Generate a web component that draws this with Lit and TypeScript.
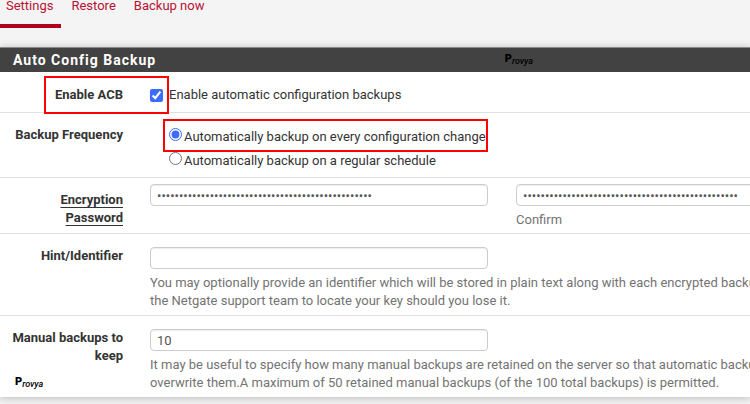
import { LitElement, html, css } from "lit";
import { customElement } from "lit/decorators.js";

@customElement("provya-mark")
class ProvyaMark extends LitElement {
  static styles = css`
    :host {
      display: flex;
      align-items: flex-end;
      color: #000;
      letter-spacing: normal;
    }
    .initial {
      font: 900 11px/12px Roboto, sans-serif;
    }
    .rest {
      font: italic 500 9px/8px Roboto, sans-serif;
    }
  `;
  render() {
    return html`<span class="initial">P</span><span class="rest">rovya</span>`;
  }
}

@customElement("app-root")
class AppRoot extends LitElement {
  static styles = css`
    :host {
      display: block;
      min-height: 100vh;
      overflow: hidden;
      background: #f4f4f4;
      color: #333;
      font: 400 13px/18px Roboto, sans-serif;
    }
    * {
      box-sizing: border-box;
    }
    .tabs {
      display: flex;
      gap: 4px;
      margin-bottom: 19px;
    }
    .tab {
      padding: 0 8px 0 6px;
      color: #b71234;
      text-decoration: none;
      border-bottom: 4px solid transparent;
      height: 28px;
      line-height: 12px;
    }
    .tab.active {
      border-bottom-color: #b0001e;
    }
    .panel {
      position: relative;
      background: #fff;
      box-shadow: 0 1px 8px rgba(0, 0, 0, 0.25);
    }
    .title {
      position: relative;
      margin: 0;
      padding: 0 13px;
      background: #424242;
      border-top: 1px solid #8a8a8a;
      color: #fff;
      font-size: 14px;
      font-weight: 700;
      line-height: 24px;
      letter-spacing: 1px;
    }
    .title-mark {
      position: absolute;
      left: 67.3%;
      top: 5px;
    }
    .foot-mark {
      position: absolute;
      left: 15px;
      bottom: 9px;
    }
    .row {
      position: relative;
      display: grid;
      grid-template-columns: 123px minmax(0, 1fr);
      column-gap: 27px;
      border-bottom: 1px solid #e0e0e0;
    }
    .row:last-of-type {
      border-bottom: 0;
    }
    .short {
      padding: 14px 0 8px;
    }
    .options {
      padding: 13px 0 7px;
    }
    .secret {
      padding: 6px 0 4px;
    }
    .tall {
      padding: 13px 0 5px;
    }
    .name {
      font-weight: 700;
      text-align: right;
      padding-left: 8px;
    }
    .secret .name {
      padding-top: 7px;
      padding-left: 40px;
      text-decoration: underline;
      text-underline-offset: 3px;
    }
    .check {
      display: flex;
      align-items: center;
      gap: 6px;
    }
    input {
      margin: 0;
      accent-color: #3b6cff;
    }
    .radios {
      display: grid;
      gap: 6px;
      padding: 2px 0 0 19px;
    }
    .radio {
      display: flex;
      align-items: flex-start;
      gap: 2px;
    }
    .pair {
      display: grid;
      grid-template-columns: 1fr 1fr;
      column-gap: 28px;
      width: calc(100% + 104px);
    }
    .text {
      display: block;
      width: 100%;
      height: 22px;
      padding: 0 6px;
      border: 1px solid #ccc;
      border-radius: 4px;
      background: #fff;
      color: #555;
      font: 400 13px/18px Roboto, sans-serif;
      box-shadow: inset 0 1px 1px rgba(0, 0, 0, 0.07);
    }
    .help {
      display: block;
      margin: 5px 0 0;
      color: #737373;
    }
    .wide {
      grid-column: 1 / -1;
      white-space: nowrap;
    }
    .frame {
      position: absolute;
      border: 2px solid #ff0000;
      pointer-events: none;
    }
    .frame-enable {
      left: 44px;
      top: 4px;
      width: 125px;
      height: 38px;
      z-index: 1;
    }
    .frame-frequency {
      left: 163px;
      top: 6px;
      width: 325px;
      height: 33px;
    }
  `;

  render() {
    const secret = "x".repeat(49);
    return html`
      <nav class="tabs">
        <a class="tab active" href="#settings">Settings</a>
        <a class="tab" href="#restore">Restore</a>
        <a class="tab" href="#backup">Backup now</a>
      </nav>
      <form class="panel">
        <h2 class="title">
          Auto Config Backup
          <provya-mark class="title-mark"></provya-mark>
        </h2>
        <div class="row short">
          <span class="name" id="enable-name">Enable ACB</span>
          <label class="check">
            <input type="checkbox" checked aria-describedby="enable-name" />
            Enable automatic configuration backups
          </label>
          <span class="frame frame-enable"></span>
        </div>
        <div class="row options">
          <span class="name" id="frequency">Backup Frequency</span>
          <div class="radios" role="radiogroup" aria-labelledby="frequency">
            <label class="radio">
              <input type="radio" name="frequency" checked />
              Automatically backup on every configuration change
            </label>
            <label class="radio">
              <input type="radio" name="frequency" />
              Automatically backup on a regular schedule
            </label>
          </div>
          <span class="frame frame-frequency"></span>
        </div>
        <div class="row secret">
          <label class="name" for="password">Encryption Password</label>
          <div class="pair">
            <input class="text" id="password" type="password" .value=${secret} />
            <div>
              <input class="text" id="confirm" type="password" .value=${secret} />
              <label class="help" for="confirm">Confirm</label>
            </div>
          </div>
        </div>
        <div class="row tall">
          <label class="name" for="hint">Hint/Identifier</label>
          <div class="pair">
            <input class="text" id="hint" type="text" />
            <p class="help wide">
              You may optionally provide an identifier which will be stored in plain text along with each encrypted backup<br />
              the Netgate support team to locate your key should you lose it.
            </p>
          </div>
        </div>
        <div class="row tall">
          <label class="name" for="keep">Manual backups to keep</label>
          <div class="pair">
            <input class="text" id="keep" type="text" value="10" />
            <p class="help wide">
              It may be useful to specify how many manual backups are retained on the server so that automatic backup<br />
              overwrite them.A maximum of 50 retained manual backups (of the 100 total backups) is permitted.
            </p>
          </div>
        </div>
        <provya-mark class="foot-mark"></provya-mark>
      </form>
    `;
  }
}
